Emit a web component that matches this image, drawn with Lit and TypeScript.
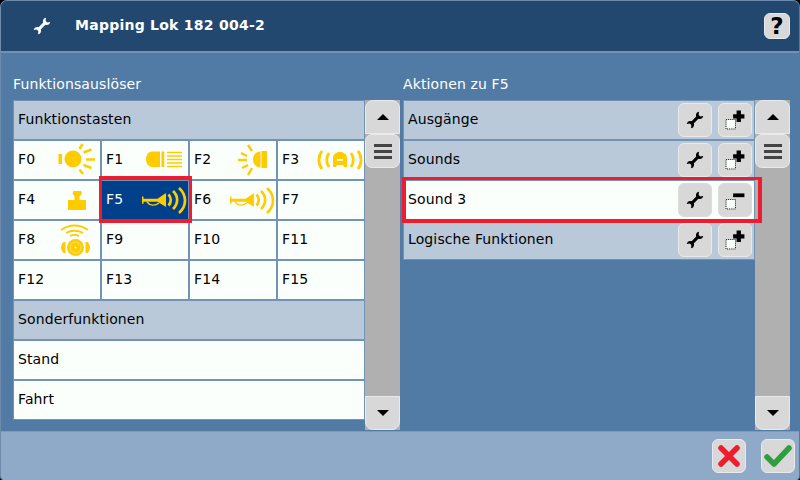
import { LitElement, html, css, svg } from "lit";
import { customElement } from "lit/decorators.js";

const Y = "#fc0";
const wrench = (c: string) => html`<svg class="wr" width="18" height="18" viewBox="0 0 18 18"><path fill="${c}" d="M13 .8 12.600 3.800 14.200 5.400 17.200 5C16.800 7.600 14.600 8.600 12.400 7.800L7.800 12.400C8.600 14.600 7.600 16.800 5 17.200L5.400 14.200 3.800 12.600 .8 13C1.200 10.400 3.400 9.400 5.600 10.200L10.200 5.600C9.400 3.400 10.400 1.200 13 .8Z"/></svg>`;
const horn = (dx: number) => svg`<g transform="translate(${dx} 0)"><path d="M142 196.500h1.500v2.200h14l8.500-5.700v14l-8.500-5.300h-14v2h-1.500z" fill="${Y}"/><path d="M147 202c3 4 8 4 12 1" stroke="${Y}" stroke-width="1.300"/><g stroke="${Y}" stroke-width="2.700"><path d="M168.500 194.500c3 3 3 8 0 11M173 191c5.500 5 5.500 13 0 18M179 188c8 7 8 18 0 25"/></g></g>`;

const icons: Record<string, unknown> = {
  F0: html`<svg class="ic" viewBox="51 140 50 40" fill="none"><rect x="58.500" y="154" width="3.500" height="10" fill="${Y}"/><circle cx="73" cy="159" r="8.500" fill="${Y}"/><g stroke="${Y}" stroke-width="2.500"><path d="M79.500 149 82.500 144M83.500 152.500 91.500 149.500M86 159.500H95M83.500 165 91.500 168M79.500 169.500 83 174"/></g></svg>`,
  F1: html`<svg class="ic" viewBox="139 140 50 40" fill="none"><path d="M160 151.500v15.500h-8c-3.500 0-6-3.500-6-7.700s2.500-7.800 6-7.800z" fill="${Y}"/><rect x="161.500" y="151.500" width="2.800" height="15.500" fill="${Y}"/><path d="M167 152.500h15M167 156h15M167 159.500h15M167 163h15M167 166.500h15" stroke="${Y}" stroke-width="1.500"/></svg>`,
  F2: html`<svg class="ic" viewBox="227 140 50 40" fill="none"><rect x="261.500" y="151" width="5.500" height="17" fill="${Y}"/><path d="M260.500 151.500v16c-4.500 0-7.500-3.500-7.500-8s3-8 7.500-8z" fill="${Y}"/><g stroke="${Y}" stroke-width="2.500"><path d="M252 151 248 145M247 156 241 153M247 160H238M248 165 242 168M252 168 248 175"/></g></svg>`,
  F3: html`<svg class="ic" viewBox="315 140 50 40" fill="none"><g stroke="${Y}" stroke-width="2.800"><path d="M322 151c-4 5-4 13 0 18M329 153c-3 4-3 10 0 14M351 153c3 4 3 10 0 14M358 151c4 5 4 13 0 18"/></g><path d="M333 167v-9c0-3.500 3-6 7-6s7 2.500 7 6v9h-3l-1-2h-6l-1 2z" fill="${Y}"/><rect x="337" y="159" width="6" height="1.800" fill="#fbfffb"/></svg>`,
  F4: html`<svg class="ic" viewBox="51 180 50 40"><path d="M73.500 191h7.500l1 2.500-2.500 3v3.500h6.500v10H68v-10h6.500v-3.500l-2-3z" fill="${Y}"/></svg>`,
  F5: html`<svg class="ic" viewBox="139 180 50 40" fill="none">${horn(0)}</svg>`,
  F6: html`<svg class="ic" viewBox="227 180 50 40" fill="none">${horn(88)}</svg>`,
  F8: html`<svg class="ic" viewBox="51 220 50 40" fill="none"><g stroke="${Y}" stroke-width="1.800"><path d="M61 230c8-6 19-6 27 0M66 233c5-3 12-3 17 0M70 236c3-1.500 6-1.500 9 0"/></g><circle cx="75.500" cy="247.500" r="8.500" fill="${Y}"/><circle cx="75.500" cy="247.500" r="5.500" stroke="#fbe38a" stroke-width=".8"/><circle cx="75.500" cy="247.500" r="1" fill="#fbfffb"/><path d="M65.500 242h-2c-1.500 1.500-2.500 3.500-2.500 5.500s1 4 2.500 5.500h2zM85.500 242h2c1.500 1.500 2.500 3.500 2.500 5.500s-1 4-2.500 5.500h-2z" fill="${Y}"/></svg>`,
};

const wrenchBtn = html`<button class="btn">${wrench("#000")}</button>`;
const mapBtn = (plus: boolean) => html`<button class="btn"><svg width="34" height="34" viewBox="718 103 34 34" fill="none">
  <rect x="725.500" y="119.500" width="10" height="10" fill="#fbfffb" stroke="#000" stroke-dasharray="1 1"/>
  ${plus ? svg`<path d="M733 114h12v4.500h-12zM736.700 110h4.600v12h-4.600z" fill="#000"/>` : svg`<rect x="733" y="113" width="12" height="4" fill="#000"/>`}
</svg></button>`;

const scrollbar = html`<div class="sb">
  <button class="sb-btn up"><span class="tri-up"></span></button>
  <button class="sb-btn handle"><span class="bars"><i></i><i></i><i></i></span></button>
  <div class="track"></div>
  <button class="sb-btn down"><span class="tri-down"></span></button>
</div>`;

@customElement("app-root")
export class AppRoot extends LitElement {
  static styles = css`
    :host { display: block; width: 800px; height: 480px; font-family: "DejaVu Sans", sans-serif; font-size: 14px; letter-spacing: .12px; background: #000; overflow: hidden; }
    * { box-sizing: border-box; }
    .win { width: 800px; height: 480px; display: flex; flex-direction: column; border-radius: 7px 7px 4px 4px; overflow: hidden; background: #517aa4; border: 1px solid #6d8cad; border-bottom: none; border-right-color: #517aa4; }
    header { height: 52px; flex: none; background: #224870; border-bottom: 2px solid #7391b2; display: flex; align-items: center; color: #fff; }
    .h-ic { width: 74px; display: flex; justify-content: center; padding-left: 8px; flex: none; }
    .title { font-weight: bold; font-size: 14px; letter-spacing: .25px; flex: 1; padding-bottom: 2px; }
    .help { margin-right: 9px; width: 26px; height: 26px; font: bold 23px "DejaVu Sans", sans-serif; }
    .btn, .sb-btn, .help, .foot-btn { background: #d8d8d8; border: 1px solid #e8ebee; border-radius: 6px; padding: 0; display: flex; align-items: center; justify-content: center; color: #000; flex: none; }
    main { flex: 1; display: grid; grid-template-columns: 387px 387px; column-gap: 3px; padding: 0 0 0 12px; height: 378px; }
    .col { display: flex; flex-direction: column; min-height: 0; }
    .lbl { height: 47px; color: #fff; display: flex; align-items: flex-end; padding-bottom: 8px; }
    .panel { display: flex; flex: 1; }
    .list { width: 352px; flex: none; display: flex; flex-direction: column; align-items: stretch; align-self: flex-start; }
    .sec, .row { height: 40px; display: flex; align-items: center; padding: 0 0 2px 4px; border: 1px solid #7393b5; position: relative; }
    .sec { background: #b9c9da; color: #000; }
    .row { background: #fbfffb; color: #000; }
    .grid { display: grid; grid-template-columns: repeat(4, 88px); }
    .cell { height: 40px; background: #fbfffb; border: 1px solid #7393b5; display: flex; align-items: center; padding: 0 0 2px 4px; position: relative; color: #000; }
    .cell.sel { background: #003f8a; color: #fff; z-index: 1; }
    .cell.sel::after { content: ""; position: absolute; top: -5px; bottom: -4px; left: -3px; right: -4px; border: 3px solid #ed1c2e; border-top-width: 4px; border-bottom-width: 4px; pointer-events: none; }
    .ic { width: 50px; height: 40px; margin: 0 -1px -2px auto; flex: none; }
    .acts { margin: 0 0 -2px auto; display: flex; gap: 6px; padding-right: 2px; }
    .acts .btn { width: 34px; height: 34px; }
    .sel-row { z-index: 1; }
    .sel-row::after { content: ""; position: absolute; top: -4px; bottom: -4px; left: -2px; right: -8px; border: 3px solid #ed1c2e; border-left-width: 4px; border-right-width: 4px; border-bottom-width: 4px; pointer-events: none; }
    .sel-row .btn { border-color: #dcdcdc; }
    .sb { width: 35px; display: flex; flex-direction: column; height: 330px; background: #b0b0b0; }
    .sb-btn { width: 35px; height: 34px; }
    .up { border-radius: 8px 8px 0 0; height: 34px; }
    .handle { border-radius: 7px; }
    .down { border-radius: 0 0 8px 8px; }
    .track { flex: 1; }
    .tri-up { width: 0; height: 0; border: 6px solid transparent; border-top: none; border-bottom: 6px solid #000; }
    .tri-down { width: 0; height: 0; border: 6px solid transparent; border-bottom: none; border-top: 6px solid #000; }
    .bars { display: flex; flex-direction: column; gap: 3px; width: 18px; }
    .bars i { height: 3px; background: #444; display: block; }
    footer { height: 49px; flex: none; background: #8fa9c8; border-top: 1px solid #7d9abb; display: flex; justify-content: flex-end; align-items: center; gap: 15px; padding-right: 4px; }
    .foot-btn { width: 34px; height: 34px; }
  `;

  render() {
    const fs = ["F0","F1","F2","F3","F4","F5","F6","F7","F8","F9","F10","F11","F12","F13","F14","F15"];
    return html`<div class="win">
      <header>
        <div class="h-ic">${wrench("#fff")}</div>
        <div class="title">Mapping Lok 182 004-2</div>
        <button class="help">?</button>
      </header>
      <main>
        <section class="col">
          <div class="lbl">Funktionsauslöser</div>
          <div class="panel">
            <div class="list">
              <div class="sec">Funktionstasten</div>
              <div class="grid">
                ${fs.map((f) => html`<div class="cell ${f === "F5" ? "sel" : ""}">${f}${icons[f] ?? ""}</div>`)}
              </div>
              <div class="sec">Sonderfunktionen</div>
              <div class="row">Stand</div>
              <div class="row">Fahrt</div>
            </div>
            ${scrollbar}
          </div>
        </section>
        <section class="col">
          <div class="lbl">Aktionen zu F5</div>
          <div class="panel">
            <div class="list">
              <div class="sec">Ausgänge<div class="acts">${wrenchBtn}${mapBtn(true)}</div></div>
              <div class="sec">Sounds<div class="acts">${wrenchBtn}${mapBtn(true)}</div></div>
              <div class="row sel-row">Sound 3<div class="acts">${wrenchBtn}${mapBtn(false)}</div></div>
              <div class="sec">Logische Funktionen<div class="acts">${wrenchBtn}${mapBtn(true)}</div></div>
            </div>
            ${scrollbar}
          </div>
        </section>
      </main>
      <footer>
        <button class="foot-btn"><svg width="26" height="26" viewBox="0 0 26 26"><path d="M5 5 21 21M21 5 5 21" stroke="#ed1c2e" stroke-width="5.500" stroke-linecap="round"/></svg></button>
        <button class="foot-btn"><svg width="30" height="26" viewBox="0 0 30 26" fill="none"><path d="M4 14 11 21 26 5" stroke="#2f9e3f" stroke-width="5.500" stroke-linecap="round" stroke-linejoin="round"/></svg></button>
      </footer>
    </div>`;
  }
}
